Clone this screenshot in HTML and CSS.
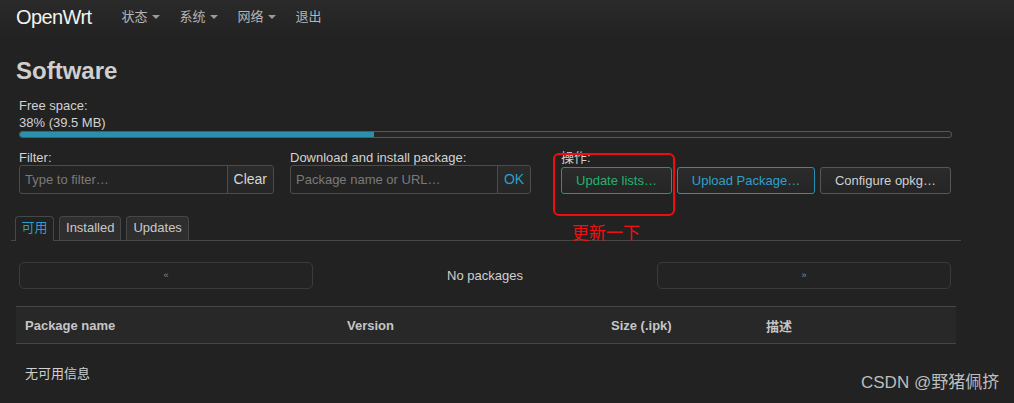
FILE: index.html
```html
<!DOCTYPE html>
<html lang="zh">
<head>
<meta charset="utf-8">
<title>Software - OpenWrt</title>
<link rel="stylesheet" href="styles.css">
</head>
<body>
<header class="topbar">
  <span class="brand">OpenWrt</span>
  <nav class="nav">
    <span class="nav-item">状态<i class="caret"></i></span>
    <span class="nav-item">系统<i class="caret"></i></span>
    <span class="nav-item">网络<i class="caret"></i></span>
    <span class="nav-item">退出</span>
  </nav>
</header>
<main class="main">
  <h2 class="title">Software</h2>
  <div class="section">
    <div class="line">Free space:</div>
    <div class="line">38% (39.5 MB)</div>
    <div class="progress"><div class="progress-fill" style="width:38%"></div></div>

    <div class="form-row">
      <div class="group group-filter">
        <label class="label">Filter:</label>
        <div class="input-group">
          <span class="input placeholder">Type to filter…</span>
          <span class="addon">Clear</span>
        </div>
      </div>
      <div class="group group-download">
        <label class="label">Download and install package:</label>
        <div class="input-group">
          <span class="input placeholder">Package name or URL…</span>
          <span class="addon addon-ok">OK</span>
        </div>
      </div>
      <div class="group group-actions">
        <label class="label">操作:</label>
        <div class="buttons">
          <span class="btn btn-green">Update lists…</span>
          <span class="btn btn-blue">Upload Package…</span>
          <span class="btn btn-neutral">Configure opkg…</span>
        </div>
        <div class="annot-box"></div>
        <div class="annot-text">更新一下</div>
      </div>
    </div>
  </div>

  <div class="tabs">
    <span class="tab tab-active">可用</span>
    <span class="tab">Installed</span>
    <span class="tab">Updates</span>
  </div>

  <div class="pager">
    <span class="pager-btn">«</span>
    <span class="pager-info">No packages</span>
    <span class="pager-btn">»</span>
  </div>

  <div class="table">
    <div class="thead">
      <span class="col c1">Package name</span>
      <span class="col c2">Version</span>
      <span class="col c3">Size (.ipk)</span>
      <span class="col c4">描述</span>
    </div>
    <div class="empty">无可用信息</div>
  </div>
</main>
<div class="watermark">CSDN @野猪佩挤</div>
</body>
</html>
```

FILE: styles.css
```css
* { box-sizing: border-box; }

html, body {
  margin: 0;
  padding: 0;
  background: #222222;
  color: #cfcfcf;
  font-family: "Liberation Sans", "Noto Sans CJK SC", sans-serif;
  font-size: 13px;
  height: 100%;
  overflow: hidden;
}

.topbar {
  height: 34px;
  display: flex;
  align-items: center;
  padding-left: 16px;
  background: linear-gradient(#2a2a2a, #232323);
}

.brand {
  font-size: 20px;
  letter-spacing: -0.6px;
  color: #f2f2f2;
  line-height: 32px;
  margin-right: 30px;
}

.nav {
  display: flex;
  align-items: center;
}

.nav-item {
  display: flex;
  align-items: center;
  color: #b4b4b4;
  font-size: 13px;
  line-height: 32px;
  width: 58px;
}

.caret {
  display: inline-block;
  width: 0;
  height: 0;
  margin-left: 5px;
  border-left: 4px solid transparent;
  border-right: 4px solid transparent;
  border-top: 4px solid #9a9a9a;
}

.main {
  position: relative;
  padding-left: 16px;
  width: 956px;
}

.title {
  margin: 23px 0 0 0;
  font-size: 24px;
  line-height: 28px;
  font-weight: bold;
  color: #cfcfcf;
}

.section {
  padding: 0 3px;
  margin-top: 12px;
}

.line {
  line-height: 17px;
  color: #d2d2d2;
}

.progress {
  height: 7px;
  width: 933px;
  border: 1px solid #575757;
  border-radius: 3px;
  background: #262626;
  overflow: hidden;
}

.progress-fill {
  height: 100%;
  background: #2a90ab;
}

.form-row {
  display: flex;
  margin-top: 12px;
}

.group {
  position: relative;
  display: flex;
  flex-direction: column;
}

.group-filter { width: 255px; margin-right: 16px; }
.group-download { width: 241px; margin-right: 30px; }

.label {
  line-height: 15px;
  color: #d2d2d2;
}

.input-group {
  display: flex;
  height: 29px;
  border: 1px solid #4c4c4c;
  border-radius: 3px;
  background: #232323;
}

.input {
  flex: 1;
  padding-left: 5px;
  line-height: 27px;
  white-space: nowrap;
  overflow: hidden;
}

.placeholder { color: #7a7a7a; }

.addon {
  border-left: 1px solid #4c4c4c;
  padding: 0 6px;
  line-height: 27px;
  color: #d6d6d6;
  font-size: 14px;
  background: linear-gradient(#2b2b2b, #262626);
  border-radius: 0 3px 3px 0;
}

.addon-ok {
  color: #2c9ec9;
  width: 33px;
  padding: 0;
  text-align: center;
}

.buttons {
  display: flex;
  gap: 5px;
  margin-top: 2px;
}

.btn {
  height: 27px;
  line-height: 25px;
  border-radius: 3px;
  text-align: center;
  background: linear-gradient(#2b2b2b, #252525);
  font-size: 13px;
}

.btn-green { width: 111px; border: 1px solid #1e9e5c; color: #21b46c; }
.btn-blue { width: 138px; border: 1px solid #268fb4; color: #2ea0cc; }
.btn-neutral { width: 131px; border: 1px solid #575757; color: #d0d0d0; }

.annot-box {
  position: absolute;
  left: -8px;
  top: 3px;
  width: 122px;
  height: 63px;
  border: 2px solid #f20d0d;
  border-radius: 6px;
}

.annot-text {
  position: absolute;
  left: 11px;
  top: 74px;
  font-size: 17px;
  line-height: 20px;
  color: #f01010;
  white-space: nowrap;
}

.tabs {
  display: flex;
  gap: 5px;
  margin: 22px -5px 0 -5px;
  padding-left: 4px;
  width: 950px;
  border-bottom: 1px solid #474747;
}

.tab {
  height: 24px;
  line-height: 22px;
  padding: 0 6px;
  border: 1px solid #474747;
  border-bottom: none;
  border-radius: 4px 4px 0 0;
  background: #2e2e2e;
  color: #c9c9c9;
}

.tab-active {
  background: #222222;
  color: #2c9ec9;
  padding: 0 5.5px;
  height: 25px;
  margin-bottom: -1px;
}

.pager {
  display: flex;
  align-items: center;
  margin: 21px 0 0 3px;
  width: 932px;
}

.pager-btn {
  width: 294px;
  height: 27px;
  border: 1px solid #3b3b3b;
  border-radius: 5px;
  background: #232323;
  text-align: center;
  line-height: 25px;
  font-size: 9px;
  color: #8a8a8a;
}

.pager-info {
  flex: 1;
  text-align: center;
  color: #d0d0d0;
}

.table {
  margin-top: 17px;
  width: 940px;
}

.thead {
  display: flex;
  align-items: center;
  height: 38px;
  background: #282828;
  border-top: 1px solid #454545;
  border-bottom: 1px solid #454545;
  font-weight: bold;
  color: #c6c6c6;
}

.col { padding-left: 9px; }
.c1 { width: 322px; }
.c2 { width: 264px; }
.c3 { width: 155px; }
.c4 { flex: 1; }

.empty {
  padding: 21px 0 0 9px;
  line-height: 17px;
  color: #d0d0d0;
}

.watermark {
  position: absolute;
  left: 861px;
  top: 373px;
  font-size: 17px;
  line-height: 20px;
  color: rgba(220, 220, 220, 0.85);
  white-space: nowrap;
}
```
